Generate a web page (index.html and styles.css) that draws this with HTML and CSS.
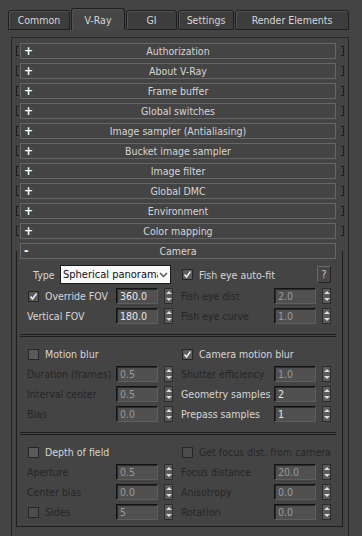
FILE: index.html
```html
<!DOCTYPE html>
<html lang="en">
<head>
  <meta charset="UTF-8" />
  <title>Render Setup - V-Ray</title>
  <link rel="stylesheet" href="styles.css">
</head>
<body>

  <!-- tabs -->
  <div class="tabs">
    <div class="tab t-common">Common</div>
    <div class="tab t-vray active">V-Ray</div>
    <div class="tab t-gi">GI</div>
    <div class="tab t-settings">Settings</div>
    <div class="tab t-elements">Render Elements</div>
  </div>

  <div class="panel">
    <div class="rollout"><span class="brk-l"></span><div class="head"><b class="sign">+</b><span>Authorization</span></div><span class="brk-r"></span></div>
    <div class="rollout"><span class="brk-l"></span><div class="head"><b class="sign">+</b><span>About V-Ray</span></div><span class="brk-r"></span></div>
    <div class="rollout"><span class="brk-l"></span><div class="head"><b class="sign">+</b><span>Frame buffer</span></div><span class="brk-r"></span></div>
    <div class="rollout"><span class="brk-l"></span><div class="head"><b class="sign">+</b><span>Global switches</span></div><span class="brk-r"></span></div>
    <div class="rollout"><span class="brk-l"></span><div class="head"><b class="sign">+</b><span>Image sampler (Antialiasing)</span></div><span class="brk-r"></span></div>
    <div class="rollout"><span class="brk-l"></span><div class="head"><b class="sign">+</b><span>Bucket image sampler</span></div><span class="brk-r"></span></div>
    <div class="rollout"><span class="brk-l"></span><div class="head"><b class="sign">+</b><span>Image filter</span></div><span class="brk-r"></span></div>
    <div class="rollout"><span class="brk-l"></span><div class="head"><b class="sign">+</b><span>Global DMC</span></div><span class="brk-r"></span></div>
    <div class="rollout"><span class="brk-l"></span><div class="head"><b class="sign">+</b><span>Environment</span></div><span class="brk-r"></span></div>
    <div class="rollout"><span class="brk-l"></span><div class="head"><b class="sign">+</b><span>Color mapping</span></div><span class="brk-r"></span></div>

    <!-- camera rollout, opened -->
    <div class="rollout-open">
      <div class="rollout"><span class="brk-l hide"></span><div class="head"><b class="sign">-</b><span>Camera</span></div><span class="brk-r hide"></span></div>

      <div class="body">
        <div class="sec sec-first">
          <div class="row row-a">
            <span class="type-label">Type</span>
            <div class="select">
              <span class="select-text">Spherical panorama</span>
              <svg class="chev" width="9" height="6" viewBox="0 0 9 6"><polyline points="1,1 4.5,4.5 8,1" fill="none" stroke="#555" stroke-width="1.5"/></svg>
            </div>
          </div>
          <div class="row row-a">
            <span class="cb"><svg width="9" height="9" viewBox="0 0 9 9"><polyline points="1.5,4.5 3.5,7 7.5,1.5" fill="none" stroke="#eee" stroke-width="1.6"/></svg></span>
            <span>Fish eye auto-fit</span>
            <span class="help">?</span>
          </div>

          <div class="row">
            <span class="cb"><svg width="9" height="9" viewBox="0 0 9 9"><polyline points="1.5,4.5 3.5,7 7.5,1.5" fill="none" stroke="#eee" stroke-width="1.6"/></svg></span>
            <span class="label">Override FOV</span><span class="num">360.0</span><span class="spin"></span>
          </div>
          <div class="row off">
            <span class="label">Fish eye dist</span><span class="num">2.0</span><span class="spin"></span>
          </div>

          <div class="row">
            <span class="label">Vertical FOV</span><span class="num">180.0</span><span class="spin"></span>
          </div>
          <div class="row off">
            <span class="label">Fish eye curve</span><span class="num">1.0</span><span class="spin"></span>
          </div>
        </div>

        <div class="sep"></div>

        <div class="sec">
          <div class="row">
            <span class="cb"></span><span>Motion blur</span>
          </div>
          <div class="row">
            <span class="cb"><svg width="9" height="9" viewBox="0 0 9 9"><polyline points="1.5,4.5 3.5,7 7.5,1.5" fill="none" stroke="#eee" stroke-width="1.6"/></svg></span>
            <span>Camera motion blur</span>
          </div>

          <div class="row off">
            <span class="label">Duration (frames)</span><span class="num">0.5</span><span class="spin"></span>
          </div>
          <div class="row off">
            <span class="label">Shutter efficiency</span><span class="num">1.0</span><span class="spin"></span>
          </div>

          <div class="row off">
            <span class="label">Interval center</span><span class="num">0.5</span><span class="spin"></span>
          </div>
          <div class="row">
            <span class="label">Geometry samples</span><span class="num">2</span><span class="spin"></span>
          </div>

          <div class="row off">
            <span class="label">Bias</span><span class="num">0.0</span><span class="spin"></span>
          </div>
          <div class="row">
            <span class="label">Prepass samples</span><span class="num">1</span><span class="spin"></span>
          </div>
        </div>

        <div class="sep"></div>

        <div class="sec sec-last">
          <div class="row">
            <span class="cb"></span><span>Depth of field</span>
          </div>
          <div class="row off">
            <span class="cb"></span><span class="label">Get focus dist. from camera</span>
          </div>

          <div class="row off">
            <span class="label">Aperture</span><span class="num">0.5</span><span class="spin"></span>
          </div>
          <div class="row off">
            <span class="label">Focus distance</span><span class="num">20.0</span><span class="spin"></span>
          </div>

          <div class="row off">
            <span class="label">Center bias</span><span class="num">0.0</span><span class="spin"></span>
          </div>
          <div class="row off">
            <span class="label">Anisotropy</span><span class="num">0.0</span><span class="spin"></span>
          </div>

          <div class="row off">
            <span class="cb"></span><span class="label">Sides</span><span class="num">5</span><span class="spin"></span>
          </div>
          <div class="row off">
            <span class="label">Rotation</span><span class="num">0.0</span><span class="spin"></span>
          </div>
        </div>
      </div>
    </div>
  </div>

</body>
</html>
```

FILE: styles.css
```css
html, body {
  margin: 0;
  padding: 0;
}

body {
  width: 362px;
  height: 536px;
  overflow: hidden;
  background-color: #444;
  font-family: "DejaVu Sans Condensed", "Liberation Sans", sans-serif;
  font-size: 10.5px;
  color: #d6d6d6;
}

/* tabs */
.tabs {
  display: flex;
  align-items: flex-end;
  height: 30px;
  padding-left: 8px;
  box-sizing: border-box;
}

.tab {
  height: 20px;
  box-sizing: border-box;
  margin-right: 1px;
  background-color: #3d3d3d;
  border: 1px solid #1f1f1f;
  border-radius: 3px 3px 0 0;
  box-shadow: inset 1px 1px 0 #535353;
  display: flex;
  align-items: center;
  justify-content: center;
}

.tab.active {
  height: 22px;
  background-color: #464646;
  border-bottom: none;
}

.t-common { width: 62px; }
.t-vray { width: 54px; }
.t-gi { width: 51px; }
.t-settings { width: 56px; }
.t-elements { width: 114px; }

/* main panel */
.panel {
  margin: 7px 0 0 11px;
  width: 338px;
  height: 510px;
  box-sizing: border-box;
  border: 1px solid #262626;
  border-bottom: none;
  padding-top: 5px;
}

.rollout {
  display: flex;
  align-items: center;
  height: 16px;
  margin-bottom: 4px;
  padding-left: 4px;
}

.brk-l {
  width: 2px;
  height: 8px;
  border: 1px solid #1e1e1e;
  border-right: 0;
  margin-right: 1px;
}

.brk-r {
  width: 2px;
  height: 8px;
  border: 1px solid #1e1e1e;
  border-left: 0;
  margin-left: 5px;
}

.hide {
  visibility: hidden;
}

.head {
  width: 316px;
  height: 16px;
  box-sizing: border-box;
  border: 1px solid #666;
  display: grid;
  grid-template-columns: 1fr auto 1fr;
  align-items: center;
  white-space: nowrap;
}

.sign {
  justify-self: start;
  padding-left: 3px;
  font-size: 12px;
  line-height: 1;
  color: #fff;
}

.rollout-open {
  position: relative;
}

.rollout-open::before {
  content: "";
  position: absolute;
  top: 8px;
  left: 4px;
  right: 5px;
  bottom: 0;
  border: 1px solid #1e1e1e;
  border-top: 0;
}

.rollout-open .rollout {
  margin-bottom: 0;
}

.body {
  margin-left: 8px;
  width: 316px;
}

.sec {
  display: grid;
  grid-template-columns: 146px 150px;
  column-gap: 8px;
  row-gap: 4px;
  padding: 9px 0 10px 7px;
}

.sec-first {
  padding-top: 6px;
}

.sec-last {
  padding-bottom: 7px;
}

.sep {
  height: 1px;
  border-top: 1px solid #1e1e1e;
  border-bottom: 1px solid #1e1e1e;
}

/* controls */
.row {
  display: flex;
  align-items: center;
  height: 16px;
  white-space: nowrap;
}

.row-a {
  height: 19px;
}

.label {
  flex: 1;
}

.type-label {
  width: 33px;
  padding-left: 6px;
  box-sizing: border-box;
}

.select {
  width: 111px;
  height: 19px;
  box-sizing: border-box;
  border: 1px solid #1a1a1a;
  background-color: #f8f8f8;
  color: #111;
  font-size: 11px;
  display: flex;
  align-items: center;
  padding-left: 2px;
}

.select-text {
  flex: 1;
  min-width: 0;
  overflow: hidden;
}

.chev {
  margin: 0 2px 0 1px;
  flex: none;
}

.cb {
  width: 11px;
  height: 11px;
  box-sizing: border-box;
  border: 1px solid #262626;
  background-color: #5a5a5a;
  margin-left: 1px;
  margin-right: 6px;
  flex: none;
  display: flex;
  align-items: center;
  justify-content: center;
}

.help {
  margin-left: auto;
  width: 14px;
  height: 17px;
  box-sizing: border-box;
  border: 1px solid;
  border-color: #6a6a6a #222 #222 #6a6a6a;
  background-color: #474747;
  color: #ccc;
  text-align: center;
  line-height: 15px;
}

.num {
  width: 42px;
  height: 16px;
  box-sizing: border-box;
  flex: none;
  border: 1px solid;
  border-color: #141414 #5e5e5e #5e5e5e #141414;
  box-shadow: inset 1px 1px 0 #2a2a2a;
  background-color: #505050;
  padding-left: 3px;
  line-height: 14px;
  color: #e8e8e8;
}

.spin {
  width: 9px;
  height: 16px;
  box-sizing: border-box;
  flex: none;
  margin-left: 6px;
  border: 1px solid #2c2c2c;
  background-color: #5a5a5a;
  display: flex;
  flex-direction: column;
  align-items: center;
  justify-content: space-around;
}

.spin::before,
.spin::after {
  content: "";
  width: 0;
  height: 0;
  border-left: 3px solid transparent;
  border-right: 3px solid transparent;
}

.spin::before {
  border-bottom: 3px solid #ddd;
}

.spin::after {
  border-top: 3px solid #ddd;
}

/* disabled rows */
.off {
  color: #262626;
}

.off .num {
  color: #9a9a9a;
}

.off .cb {
  background-color: #4c4c4c;
}
```
